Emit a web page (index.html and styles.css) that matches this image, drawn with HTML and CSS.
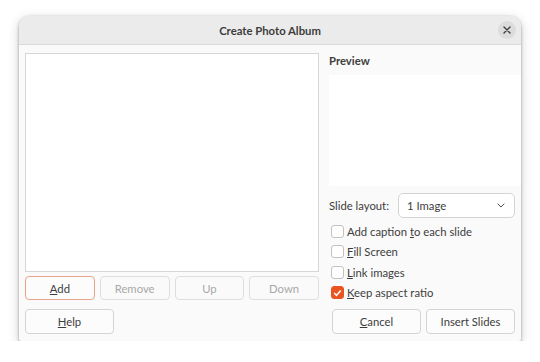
FILE: index.html
```html
<!DOCTYPE html>
<html lang="en">
<head>
  <meta charset="UTF-8" />
  <title>Create Photo Album</title>
  <link rel="stylesheet" href="styles.css">
</head>
<body>

  <div class="dialog">
    <div class="titlebar">
      <span class="title">Create Photo Album</span>
      <span class="close">
        <svg width="8" height="8" viewBox="0 0 8 8"><path d="M1 1 L7 7 M7 1 L1 7" stroke="#3d3d3d" stroke-width="1.4" stroke-linecap="round"/></svg>
      </span>
    </div>

    <div class="content">
      <!-- left: image list -->
      <div class="left">
        <div class="filelist"></div>
        <div class="listbtns">
          <button class="btn focus"><u>A</u>dd</button>
          <button class="btn" disabled>Remove</button>
          <button class="btn" disabled>Up</button>
          <button class="btn" disabled>Down</button>
        </div>
        <div class="bottom-left">
          <button class="btn wide"><u>H</u>elp</button>
        </div>
      </div>

      <!-- right: preview and options -->
      <div class="right">
        <div class="preview-label">Preview</div>
        <div class="preview"></div>

        <div class="layout-row">
          <span>Slide layout:</span>
          <div class="select">
            <span>1 Image</span>
            <svg width="8" height="5" viewBox="0 0 8 5"><path d="M0.7 0.7 L4 4 L7.3 0.7" fill="none" stroke="#4a4a4a" stroke-width="1"/></svg>
          </div>
        </div>

        <div class="checks">
          <label class="check"><span class="box"></span><span>Add caption <u>t</u>o each slide</span></label>
          <label class="check"><span class="box"></span><span><u>F</u>ill Screen</span></label>
          <label class="check"><span class="box"></span><span><u>L</u>ink images</span></label>
          <label class="check"><span class="box on">
            <svg width="9" height="8" viewBox="0 0 9 8"><path d="M1.2 4 L3.5 6.3 L7.8 1.5" fill="none" stroke="#fff" stroke-width="1.5"/></svg>
          </span><span><u>K</u>eep aspect ratio</span></label>
        </div>

        <div class="bottom-right">
          <button class="btn wide"><u>C</u>ancel</button>
          <button class="btn wide">Insert Slides</button>
        </div>
      </div>
    </div>
  </div>

</body>
</html>
```

FILE: styles.css
```css
body {
  margin: 0;
  background-color: #ffffff;
  font-family: Lato, "Noto Sans", sans-serif;
  font-size: 11.3px;
  color: #3d3d3d;
}

.dialog {
  margin: 16px 0 0 19px;
  width: 502px;
  height: 325px;
  background-color: #fafafa;
  border-radius: 10px 10px 2px 2px;
  box-shadow: 0 1px 3px rgba(0,0,0,0.35), 0 3px 12px rgba(0,0,0,0.18);
  overflow: hidden;
  display: flex;
  flex-direction: column;
}

.titlebar {
  height: 28px;
  background-color: #ebebeb;
  border-bottom: 1px solid #dadada;
  display: flex;
  align-items: center;
  justify-content: center;
  position: relative;
}

.title {
  font-weight: bold;
  font-size: 11.3px;
}

.close {
  position: absolute;
  right: 5px;
  top: 5px;
  width: 18px;
  height: 18px;
  border-radius: 50%;
  background-color: #dcdcdc;
  display: flex;
  align-items: center;
  justify-content: center;
}

.content {
  flex: 1;
  display: flex;
  padding: 8px 6px 7px 6px;
  gap: 10px;
}

.left {
  width: 294px;
  display: flex;
  flex-direction: column;
}

.filelist {
  height: 217px;
  background-color: #ffffff;
  border: 1px solid #d6d6d6;
}

.listbtns {
  display: flex;
  gap: 5px;
  margin-top: 4px;
}

.listbtns .btn {
  width: 70px;
  height: 24px;
}

.bottom-left {
  margin-top: auto;
}

.btn {
  font-family: inherit;
  font-size: 11.3px;
  color: #3d3d3d;
  background-color: #fcfcfc;
  border: 1px solid #d4d4d4;
  border-radius: 4px;
  padding: 0;
  height: 25px;
}

.btn:disabled {
  color: #a8a8a8;
  background-color: #fafafa;
  border-color: #dedede;
}

.btn.focus {
  border-color: #e8a48a;
}

.btn.wide {
  width: 89px;
}

.right {
  flex: 1;
  display: flex;
  flex-direction: column;
}

.preview-label {
  font-weight: bold;
  line-height: 14px;
  margin-top: 1px;
}

.preview {
  height: 111px;
  margin-top: 7px;
  margin-right: -6px;
  background-color: #ffffff;
}

.layout-row {
  display: flex;
  align-items: center;
  margin-top: 7px;
  gap: 9px;
}

.select {
  flex: 1;
  height: 23px;
  background-color: #ffffff;
  border: 1px solid #d4d4d4;
  border-radius: 5px;
  display: flex;
  align-items: center;
  justify-content: space-between;
  padding: 0 9px 0 8px;
}

.checks {
  display: flex;
  flex-direction: column;
  margin-top: 3px;
}

.check {
  display: flex;
  align-items: center;
  height: 20.5px;
  padding-left: 2px;
}

.box {
  width: 11px;
  height: 11px;
  border: 1px solid #c2c2c2;
  border-radius: 3px;
  background-color: #ffffff;
  margin-right: 3px;
  display: flex;
  align-items: center;
  justify-content: center;
}

.box.on {
  background-color: #e95420;
  border-color: #e95420;
}

.bottom-right {
  margin-top: auto;
  display: flex;
  justify-content: flex-end;
  gap: 5px;
}
```
